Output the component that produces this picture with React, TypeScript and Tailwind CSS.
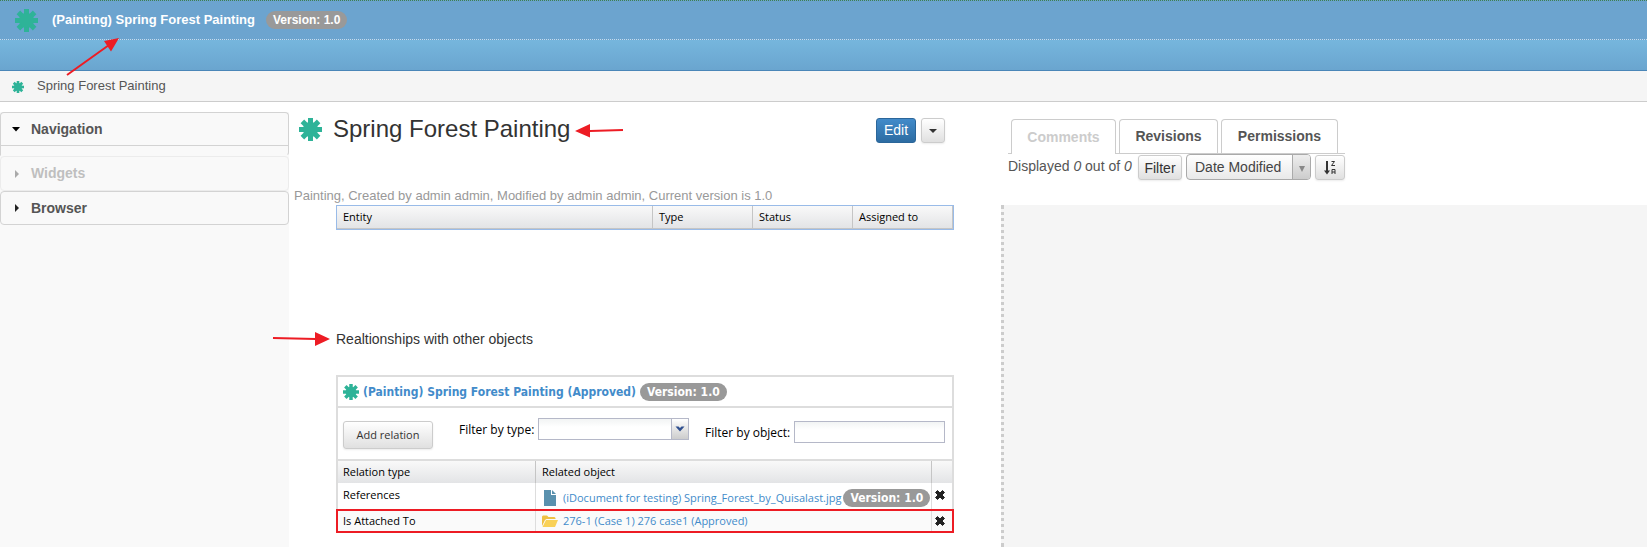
import { useState } from "react";

function Asterisk({ className }: { className: string }) {
  return (
    <svg viewBox="0 0 23 23" className={`shrink-0 ${className}`} aria-hidden="true">
      <g fill="#2eb398">
        {[0, 45, 90, 135].map((angle) => (
          <rect key={angle} x="9" y="0" width="5" height="23" transform={`rotate(${angle} 11.5 11.5)`} />
        ))}
        <circle cx="11.5" cy="11.5" r="7.6" />
      </g>
    </svg>
  );
}

function Badge({ className }: { className: string }) {
  return (
    <span className={`h-[18px] rounded-full bg-[#999] px-[7px] text-[12px] leading-[18px] font-bold whitespace-nowrap text-white ${className}`}>Version: 1.0</span>
  );
}

function Cross() {
  return (
    <svg viewBox="0 0 10 10" className="size-[10px]" aria-hidden="true">
      <path d="M0.5 2.5L2.5 0.5L5 3L7.5 0.5L9.5 2.5L7 5L9.5 7.5L7.5 9.5L5 7L2.5 9.5L0.5 7.5L3 5Z" fill="#222" stroke="#222" strokeWidth="1" strokeLinejoin="round" />
    </svg>
  );
}

const greyButton =
  "rounded-[3px] border border-[#ccc] bg-linear-to-b from-white to-[#e0e0e0] text-[#333] shadow-[0_1px_2px_rgba(0,0,0,0.08)]";
const gridHead = "border-[#c5c5c5] bg-linear-to-b from-[#f9f9f9] to-[#e3e4e6] text-left font-normal";
const gridFont = "font-['Open_Sans','Noto_Sans',sans-serif] text-[11px] text-black";
const boldFont = "font-['DejaVu_Sans_Condensed','DejaVu_Sans',sans-serif]";

function Sidebar() {
  return (
    <aside className="mt-[10px] w-[289px] shrink-0 bg-[#f9f9f9] text-[14px] font-bold text-[#555]">
      <div className="h-[44px] rounded-[4px] rounded-bl-none border border-[#d3d3d3] border-b-transparent">
        <button className="flex h-[33px] w-full items-center border-b border-[#d3d3d3]">
          <svg viewBox="0 0 16 16" className="ml-[7px] size-4" aria-hidden="true">
            <path d="M4 6h8L8 10.5z" fill="#000" />
          </svg>
          <span className="ml-[7px]">Navigation</span>
        </button>
      </div>
      <button className="flex h-[35px] w-full items-center rounded-[4px] border border-[#ececec] text-[#bfbfbf]" disabled>
        <svg viewBox="0 0 16 16" className="ml-[8px] size-4" aria-hidden="true">
          <path d="M6 4v8l4-4z" fill="#aaa" />
        </svg>
        <span className="ml-[6px]">Widgets</span>
      </button>
      <button className="flex h-[34px] w-full items-center rounded-[4px] border border-[#d3d3d3]">
        <svg viewBox="0 0 16 16" className="ml-[8px] size-4" aria-hidden="true">
          <path d="M6 4v8l4-4z" fill="#222" />
        </svg>
        <span className="ml-[6px]">Browser</span>
      </button>
    </aside>
  );
}

function EntityTable() {
  return (
    <table className={`h-[25px] w-full table-fixed border-separate border-spacing-0 border border-[#99bbe8] ${gridFont}`}>
      <colgroup>
        <col />
        <col className="w-[100px]" />
        <col className="w-[100px]" />
        <col className="w-[100px]" />
      </colgroup>
      <thead>
        <tr>
          {["Entity", "Type", "Status", "Assigned to"].map((name) => (
            <th key={name} className={`border-r border-b px-[6px] ${gridHead}`}>{name}</th>
          ))}
        </tr>
      </thead>
    </table>
  );
}

function Relations() {
  const [type, setType] = useState("");
  const [query, setQuery] = useState("");
  return (
    <section className={`border-2 border-b-0 border-[#ddd] ${gridFont}`}>
      <h3 className={`flex h-[31px] items-center border-b-2 border-[#ddd] pl-[5px] ${boldFont}`}>
        <Asterisk className="size-4" />
        <a href="#painting" className="ml-1 text-[12px] font-bold whitespace-nowrap text-[#428bca]">(Painting) Spring Forest Painting (Approved)</a>
        <Badge className="ml-1" />
      </h3>
      <div className="flex h-[53px] items-start border-b-2 border-[#ddd] pr-[7px] pl-[5px] text-[12px] whitespace-nowrap">
        <button className={`mt-[13px] h-[28px] w-[90px] text-[11px] ${greyButton}`}>Add relation</button>
        <label htmlFor="type" className="mt-[13px] ml-[26px]">Filter by type:</label>
        <div className="relative mt-[10px] ml-auto h-[22px] w-[151px] border border-[#b5b8c8] bg-linear-to-b from-[#f2f4f4] to-white to-40%">
          <select id="type" value={type} onChange={(e) => setType(e.target.value)} className="size-full appearance-none">
            <option value=""></option>
          </select>
          <span className="pointer-events-none absolute inset-y-0 right-0 flex w-[17px] items-center justify-center border-l border-[#b5b8c8] bg-linear-to-b from-white to-[#ccc]">
            <svg viewBox="0 0 10 6" className="h-[6px] w-[10px]" aria-hidden="true">
              <path d="M0.5 0.5h3L5 2L6.5 0.5h3L5 5.5z" fill="#2f4f8f" />
            </svg>
          </span>
        </div>
        <label htmlFor="object" className="mt-[16px] ml-[16px] w-[89px]">Filter by object:</label>
        <input id="object" value={query} onChange={(e) => setQuery(e.target.value)} className="mt-[13px] h-[22px] w-[151px] border border-[#b5b8c8] bg-linear-to-b from-[#f2f4f4] to-white to-40% px-1" />
      </div>
      <table className="w-full table-fixed border-separate border-spacing-0">
        <colgroup>
          <col className="w-[198px]" />
          <col />
          <col className="w-[20px]" />
        </colgroup>
        <thead>
          <tr className="h-[22px]">
            <th className={`border-r px-[5px] ${gridHead}`}>Relation type</th>
            <th className={`border-r px-[6px] ${gridHead}`}>Related object</th>
            <th className={gridHead} aria-label="Remove" />
          </tr>
        </thead>
        <tbody>
          <tr className="h-[28px]">
            <td className="border-r border-[#ddd] px-[5px] pb-1">References</td>
            <td className="border-r border-[#ddd] pt-[2px] pl-[6px]">
              <span className="flex items-center text-[#428bca]">
                <svg viewBox="0 0 16 16" className="size-4 shrink-0" aria-hidden="true">
                  <path d="M2 0h7v5h5v11H2z" fill="#5a91ae" />
                  <path d="M10 0l4 4h-4z" fill="#5a91ae" />
                </svg>
                <a href="#document" className="ml-[5px] whitespace-nowrap">(iDocument for testing) Spring_Forest_by_Quisalast.jpg</a>
                <Badge className={`ml-[2px] ${boldFont}`} />
              </span>
            </td>
            <td className="pl-[3px]"><button className="block pb-1" aria-label="Remove reference"><Cross /></button></td>
          </tr>
          <tr className="h-[20px] bg-[#fafafa] outline-2 outline-[#ed1c24]">
            <td className="border-r border-[#ddd] px-[5px]">Is Attached To</td>
            <td className="border-r border-[#ddd] px-[6px]">
              <span className="flex items-center text-[#428bca]">
                <svg viewBox="0 0 16 13" className="h-[13px] w-4 shrink-0" aria-hidden="true">
                  <path d="M0 11V1.5L1 0.5h4l1.5 1.5H12.5L13.5 3v1H4.5L3 5z" fill="#efc044" />
                  <path d="M0.5 12L4 5h12l-3 7z" fill="#f9d157" />
                </svg>
                <a href="#case" className="ml-[5px]">276-1 (Case 1) 276 case1 (Approved)</a>
              </span>
            </td>
            <td className="pl-[3px]"><button className="block" aria-label="Remove attachment"><Cross /></button></td>
          </tr>
        </tbody>
      </table>
    </section>
  );
}

function SidePanel() {
  return (
    <aside className="flex min-w-0 flex-1 flex-col text-[#555]">
      <div className="ml-[7px] flex w-[337px] flex-col">
        <nav className="mt-[17px] flex h-[35px] items-end gap-[3px] border-b border-[#ccc] pl-[3px] text-[14px] font-bold">
          <button className="-mb-px h-[35px] w-[105px] rounded-t-[4px] border border-b-0 border-[#ccc] bg-white text-[#ccc]">Comments</button>
          <button className="h-[34px] w-[99px] rounded-t-[4px] border border-b-0 border-[#ccc]">Revisions</button>
          <button className="h-[34px] w-[117px] rounded-t-[4px] border border-b-0 border-[#ccc]">Permissions</button>
        </nav>
        <div className="flex h-[27px] items-start gap-1 text-[14px] leading-[24px] whitespace-nowrap">
          <span className="mr-auto">Displayed <i>0</i> out of <i>0</i></span>
          <button className={`mt-px h-[25px] w-[44px] leading-[22px] ${greyButton}`}>Filter</button>
          <div className="relative h-[26px] w-[125px] overflow-hidden rounded-[4px] border border-[#aaa] bg-linear-to-b from-white to-[#e9e9e9]">
            <select aria-label="Sort by" className="size-full appearance-none pl-[8px] text-[#444]">
              <option>Date Modified</option>
            </select>
            <span className="pointer-events-none absolute inset-y-0 right-0 flex w-[18px] items-center justify-center border-l border-[#aaa] bg-linear-to-b from-[#eee] to-[#ccc]">
              <svg viewBox="0 0 6 6" className="mt-[4px] size-[6px]" aria-hidden="true"><path d="M0 0h6L3 6z" fill="#888" /></svg>
            </span>
          </div>
          <button className={`mt-px flex h-[25px] w-[30px] items-center justify-center ${greyButton}`} aria-label="Sort descending">
            <svg viewBox="0 0 14 16" className="h-4 w-[14px]" fill="none" stroke="#333" aria-hidden="true">
              <path d="M4 1v11" strokeWidth="2" />
              <path d="M1 10.5h6L4 14.5z" fill="#333" stroke="none" />
              <path d="M8.5 1.5h3L8.5 5.5h3.5M9 14V9.5h3V14M9 12h3" />
            </svg>
          </button>
        </div>
      </div>
      <div className="mt-[24px] flex-1 border-l-3 border-dotted border-[#ccc] bg-[#f5f5f5]" />
    </aside>
  );
}

export default function App() {
  return (
    <div className="relative flex min-h-screen flex-col overflow-hidden bg-white font-['Liberation_Sans',Arial,sans-serif] text-[13px] text-[#333]">
      <header>
        <div className="flex h-[40px] items-center border-t border-b border-dotted border-t-[#3f8050] border-b-[#c5dcee] bg-[#6ca4cf] pl-[15px] text-white">
          <Asterisk className="size-[23px]" />
          <strong className="ml-[14px]">(Painting) Spring Forest Painting</strong>
          <Badge className="ml-[11px]" />
        </div>
        <div className="h-[31px] border-b border-[#4a86b8] bg-linear-to-b from-[#76b6dd] to-[#6aa5cf]" />
        <nav className="flex h-[31px] items-center border-b border-[#ccc] bg-[#f5f5f5] pl-[12px] text-[#555]">
          <Asterisk className="mt-[2px] size-3" />
          <span className="ml-[13px]">Spring Forest Painting</span>
        </nav>
      </header>
      <div className="flex flex-1">
        <Sidebar />
        <main className="w-[712px] shrink-0 pl-[5px]">
          <div className="flex h-[84px] items-start pt-[16px] pr-[56px] pl-[5px]">
            <Asterisk className="size-[23px]" />
            <h1 className="ml-[11px] text-[24px] leading-[22px]">Spring Forest Painting</h1>
            <button className="ml-auto h-[25px] w-[40px] rounded-[3px] border border-[#2b669a] bg-linear-to-b from-[#428bca] to-[#2d6ca2] text-[14px] text-white">Edit</button>
            <button className={`ml-[5px] flex h-[25px] w-[24px] items-center justify-center ${greyButton}`} aria-label="More actions">
              <svg viewBox="0 0 8 4" className="h-1 w-2" aria-hidden="true"><path d="M0 0h8L4 4z" fill="#333" /></svg>
            </button>
          </div>
          <p className="h-[19px] leading-[19px] text-[#999]">Painting, Created by admin admin, Modified by admin admin, Current version is 1.0</p>
          <div className="mr-[47px] ml-[42px]">
            <EntityTable />
            <h2 className="mt-[99px] mb-[26px] text-[14px] leading-[20px]">Realtionships with other objects</h2>
            <Relations />
          </div>
        </main>
        <SidePanel />
      </div>
      <svg viewBox="0 0 640 350" className="pointer-events-none absolute top-0 left-0 h-[350px] w-[640px]" fill="#ed1c24" stroke="#ed1c24" strokeWidth="2" aria-hidden="true">
        <path d="M67 75L109 45M623 130L590 131M273 338L316 339" />
        <path d="M119 38L104 41L111 51.5ZM575 131L590 124V137.5ZM330 339L315 332V346Z" stroke="none" />
      </svg>
    </div>
  );
}
